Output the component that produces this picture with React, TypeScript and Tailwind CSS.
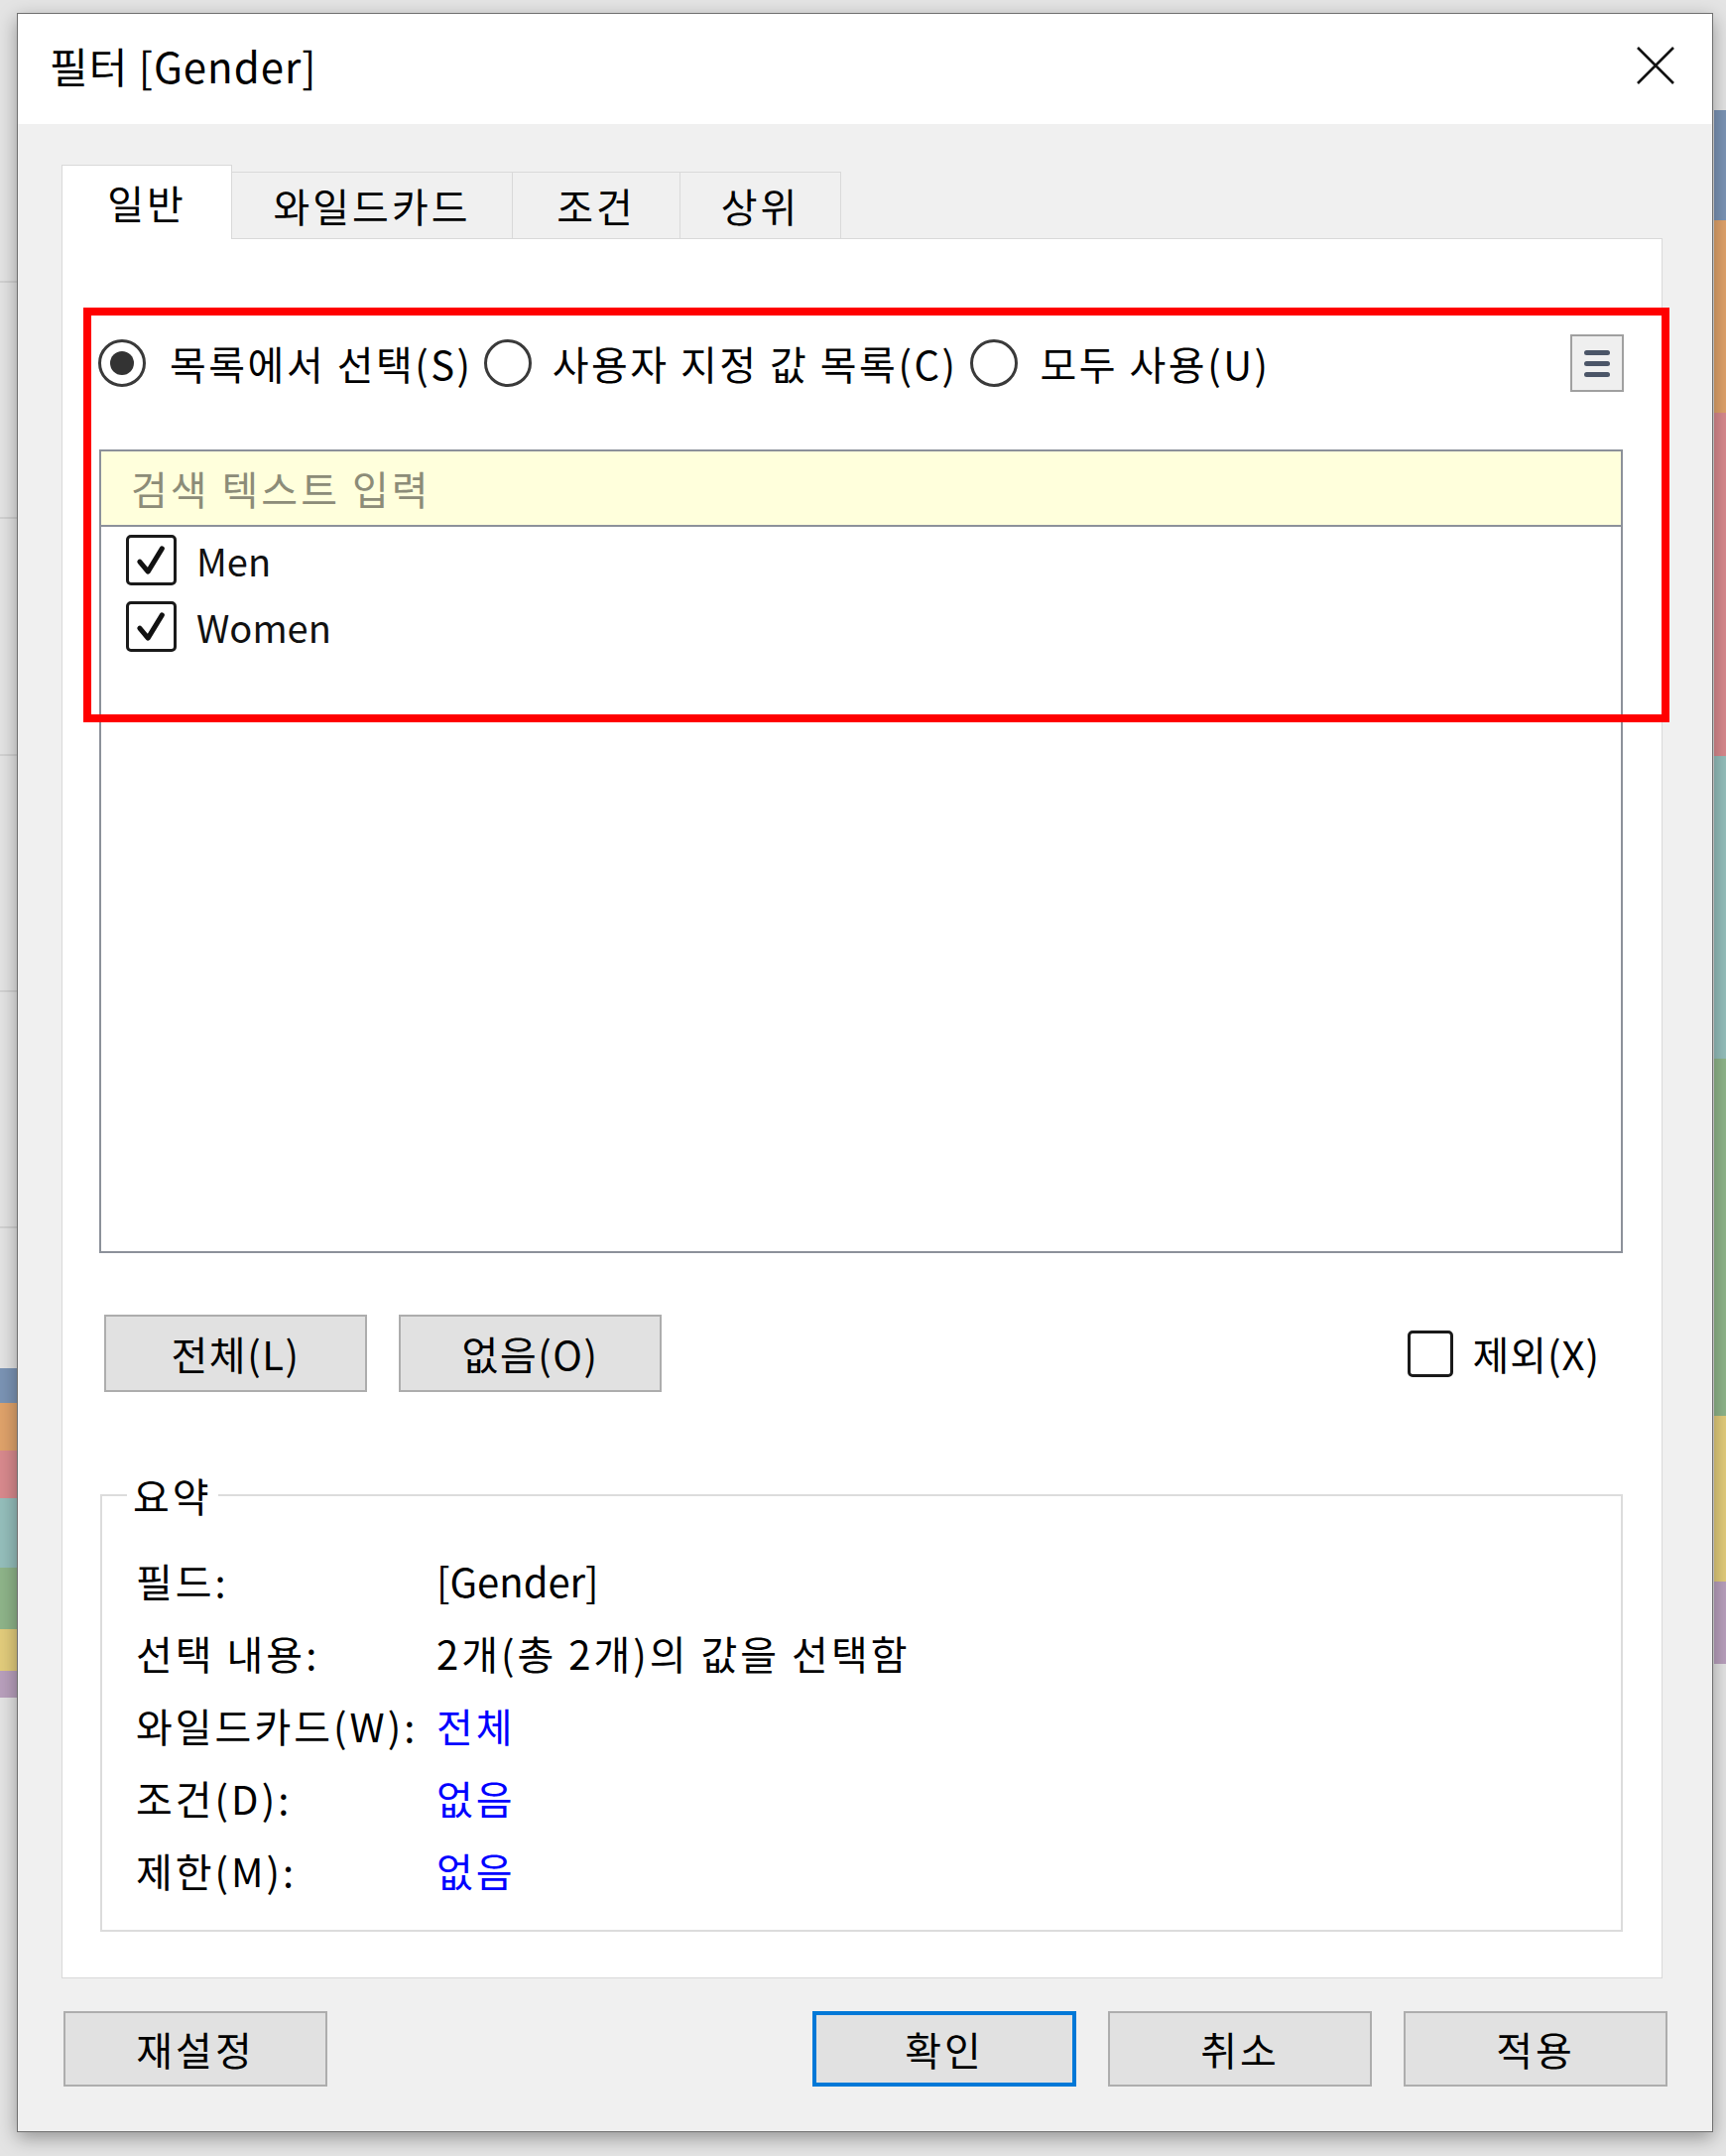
import React from "react";

function Backdrop() {
  // chart that peeks out behind the dialog
  const left = [
    ["#7b94b5", 1379, 35],
    ["#e0a36b", 1414, 48],
    ["#d98a8e", 1462, 48],
    ["#95bfbc", 1510, 70],
    ["#8fb58a", 1580, 62],
    ["#e3cd7c", 1642, 42],
    ["#b9a0bd", 1684, 27],
  ] as const;
  const right = [
    ["#7b94b5", 111, 111],
    ["#e0a36b", 222, 194],
    ["#d98a8e", 416, 346],
    ["#95bfbc", 762, 305],
    ["#8fb58a", 1067, 360],
    ["#e3cd7c", 1427, 167],
    ["#b9a0bd", 1594, 83],
  ] as const;
  return (
    <svg className="absolute inset-0 h-full w-full" viewBox="0 0 1740 2173">
      {[284, 522, 761, 999, 1237].map((y) => (
        <line key={y} x1="0" x2="20" y1={y} y2={y} stroke="#d2d2d2" strokeWidth="2" />
      ))}
      {left.map(([c, y, h]) => (
        <rect key={"l" + y} x="0" y={y} width="20" height={h} fill={c} />
      ))}
      {right.map(([c, y, h]) => (
        <rect key={"r" + y} x="1728" y={y} width="12" height={h} fill={c} />
      ))}
    </svg>
  );
}

function Radio({ checked }: { checked?: boolean }) {
  return (
    <span className="flex h-[48px] w-[48px] shrink-0 items-center justify-center rounded-full border-[3px] border-[#3a3a3a] bg-white">
      {checked && <span className="h-[24px] w-[24px] rounded-full bg-[#333]" />}
    </span>
  );
}

function CheckBox({ checked, size = "h-[51px] w-[51px]" }: { checked?: boolean; size?: string }) {
  return (
    <span className={`flex shrink-0 items-center justify-center rounded-[5px] border-[3px] border-[#1a1a1a] bg-white ${size}`}>
      {checked && (
        <svg viewBox="0 0 54 54" className="h-full w-full">
          <path d="M13 29 L23 41 L40 13" fill="none" stroke="#111" strokeWidth="6" strokeLinecap="round" strokeLinejoin="round" />
        </svg>
      )}
    </span>
  );
}

function Btn({ label, primary }: { label: string; primary?: boolean }) {
  return (
    <button
      className={
        primary
          ? "flex h-[76px] w-[266px] items-center justify-center border-[4px] border-[#0078d7] bg-[#e1e1e1] text-[40px] leading-none"
          : "flex h-[76px] w-[266px] items-center justify-center border-2 border-[#adadad] bg-[#e1e1e1] text-[40px] leading-none"
      }
    >
      {label}
    </button>
  );
}

const summary: [string, string, boolean][] = [
  ["필드:", "[Gender]", false],
  ["선택 내용:", "2개(총 2개)의 값을 선택함", false],
  ["와일드카드(W):", "전체", true],
  ["조건(D):", "없음", true],
  ["제한(M):", "없음", true],
];

export default function App() {
  return (
    <div className="relative h-[2173px] w-[1740px] overflow-hidden bg-[#e4e4e4] font-['Noto_Sans_CJK_KR',sans-serif] tracking-[3px] text-black">
      <Backdrop />

      <div className="relative ml-[17px] mt-[13px] flex h-[2136px] w-[1710px] flex-col border border-[#6f6f6f] bg-[#f0f0f0] shadow-[0_6px_18px_rgba(0,0,0,0.35)]">
        {/* Title bar */}
        <div className="flex h-[111px] shrink-0 items-center justify-between bg-white pb-[8px] pl-[32px] pr-[37px]">
          <span className="text-[42px] leading-none tracking-[1px]">필터 [Gender]</span>
          <svg viewBox="0 0 40 40" className="h-[40px] w-[40px]">
            <path d="M2 2 L38 38 M38 2 L2 38" stroke="#111" strokeWidth="2.6" />
          </svg>
        </div>

        <div className="flex flex-1 flex-col pl-[44px] pr-[50px] pt-[41px]">
          {/* Tabs */}
          <div className="relative z-10 -mb-px flex h-[75px] items-end text-[40px] leading-none">
            <div className="flex h-[75px] w-[172px] items-center justify-center border border-b-0 border-[#d9d9d9] bg-white">
              일반
            </div>
            <div className="mb-px flex h-[67px] w-[283px] items-center justify-center border border-b-0 border-l-0 border-[#d9d9d9] bg-[#f0f0f0]">
              와일드카드
            </div>
            <div className="mb-px flex h-[67px] w-[169px] items-center justify-center border border-b-0 border-l-0 border-[#d9d9d9] bg-[#f0f0f0]">
              조건
            </div>
            <div className="mb-px flex h-[67px] w-[162px] items-center justify-center border border-b-0 border-l-0 border-[#d9d9d9] bg-[#f0f0f0]">
              상위
            </div>
          </div>

          {/* Panel */}
          <div className="relative flex h-[1754px] flex-col border border-[#d9d9d9] bg-white text-[40px] leading-none">
            {/* Radio row */}
            <div className="mt-[100px] flex h-[50px] items-center pl-[36px] pr-[38px] tracking-[2.5px]">
              <Radio checked />
              <span className="ml-[24px]">목록에서 선택(S)</span>
              <span className="ml-[11px]">
                <Radio />
              </span>
              <span className="ml-[21px]">사용자 지정 값 목록(C)</span>
              <span className="ml-[13px]">
                <Radio />
              </span>
              <span className="ml-[22px]">모두 사용(U)</span>
              <div className="ml-auto flex h-[58px] w-[54px] flex-col items-center justify-center gap-[6px] border-2 border-[#a0a0a0] bg-[#efefef]">
                <span className="h-[5px] w-[26px] rounded-full bg-[#4b5567]" />
                <span className="h-[5px] w-[26px] rounded-full bg-[#4b5567]" />
                <span className="h-[5px] w-[26px] rounded-full bg-[#4b5567]" />
              </div>
            </div>

            {/* List */}
            <div className="ml-[37px] mr-[39px] mt-[62px] flex h-[810px] flex-col border-2 border-[#8c919a]">
              <div className="flex h-[76px] items-center border-b-2 border-[#8c919a] bg-[#ffffdc] pl-[30px] text-[#8c8c78]">
                검색 텍스트 입력
              </div>
              {["Men", "Women"].map((v) => (
                <div key={v} className="flex h-[67px] items-center pl-[25px]">
                  <CheckBox checked />
                  <span className="ml-[20px] text-[38px] tracking-normal text-[#111]">{v}</span>
                </div>
              ))}
            </div>

            {/* Buttons + exclude */}
            <div className="mt-[62px] flex h-[78px] items-center gap-[32px] pl-[42px] pr-[62px] tracking-[1.5px]">
              <button className="flex h-[78px] w-[265px] items-center justify-center border-2 border-[#adadad] bg-[#e1e1e1]">
                전체(L)
              </button>
              <button className="flex h-[78px] w-[265px] items-center justify-center border-2 border-[#adadad] bg-[#e1e1e1]">
                없음(O)
              </button>
              <div className="ml-auto flex items-center gap-[19px] tracking-[1px]">
                <CheckBox size="h-[47px] w-[46px]" />
                <span>제외(X)</span>
              </div>
            </div>

            {/* Summary */}
            <fieldset className="ml-[38px] mr-[39px] mt-[79px] border-2 border-[#dcdcdc] pb-[24px] pl-[34px] pt-[24px]">
              <legend className="ml-[-9px] px-[6px] leading-[50px]">요약</legend>
              {summary.map(([k, v, link]) => (
                <div key={k} className="flex h-[73px] items-center">
                  <span className="w-[303px]">{k}</span>
                  <span className={link ? "text-[#0000ff]" : k === "필드:" ? "tracking-normal" : ""}>{v}</span>
                </div>
              ))}
            </fieldset>

            {/* Highlight annotation */}
            <div className="pointer-events-none absolute left-[21px] top-[69px] h-[418px] w-[1599px] border-[8px] border-[#ff0000]" />
          </div>

          {/* Footer buttons */}
          <div className="ml-[2px] mr-[-5px] mt-[33px] flex items-center">
            <Btn label="재설정" />
            <div className="ml-auto flex gap-[32px]">
              <Btn label="확인" primary />
              <Btn label="취소" />
              <Btn label="적용" />
            </div>
          </div>
        </div>
      </div>
    </div>
  );
}
